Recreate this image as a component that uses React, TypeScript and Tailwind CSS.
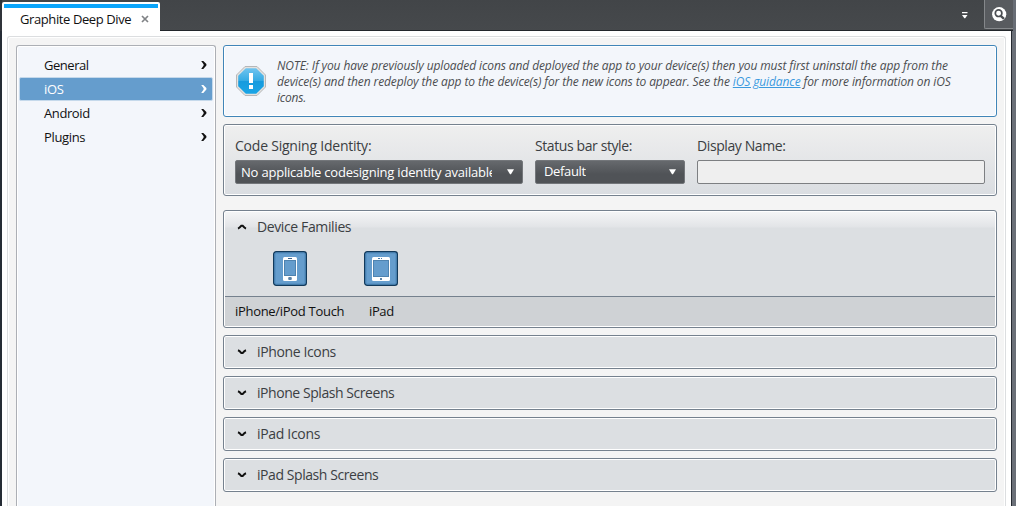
import type { ReactNode } from "react";

function Chevron({ dir, className = "" }: { dir: "up" | "down" | "right"; className?: string }) {
  if (dir === "right")
    return (
      <svg width="6" height="8" viewBox="0 0 6 8" className={className} fill="currentColor">
        <path d="M.2 0h2.1L5.4 3v1.6L2.3 8H.2l2.4-3.4V3.2z" />
      </svg>
    );
  return (
    <svg width="10" height="6" viewBox="0 0 10 6" className={className} fill="none" stroke="#111" strokeWidth="2">
      <path d={dir === "up" ? "M1 4.7C2.2 4.2 3.5 2.8 4.4 1.7h1.2c.9 1.1 2.2 2.5 3.4 3" : "M1 1.2C2.2 1.6 3.5 3 4.4 4.1h1.2C6.5 3 7.8 1.6 9 1.2"} />
    </svg>
  );
}

function Panel({ children, className = "" }: { children?: ReactNode; className?: string }) {
  return (
    <section className={`shrink-0 rounded-[3px] border border-[#75818e] shadow-[inset_0_0_0_1px_#fff] ${className}`}>
      {children}
    </section>
  );
}

function Select({ children, className = "", textClass = "" }: { children: ReactNode; className?: string; textClass?: string }) {
  return (
    <button
      className={`flex h-6 items-center justify-between rounded-[2px] border border-[#73767a] bg-linear-to-b from-[#66696d] to-[#505357] to-60% pr-[7px] text-left text-[13px] text-white ${className}`}
    >
      <span className={`overflow-hidden whitespace-nowrap leading-5 ${textClass}`}>{children}</span>
      <svg width="9" height="6" viewBox="0 0 9 6" className="shrink-0">
        <path d="M1 .3h7L5 5.2H4z" fill="#fff" />
      </svg>
    </button>
  );
}

function Device({ tablet = false }: { tablet?: boolean }) {
  return (
    <svg width="34" height="35" viewBox="0 0 34 35">
      <rect x=".7" y=".7" width="32.6" height="33.6" rx="2.5" fill="#659dcd" stroke="#123a5c" strokeWidth="1.4" />
      <rect x="1.9" y="1.9" width="30.2" height="31.2" rx="1" fill="none" stroke="#4b86b8" />
      {tablet ? (
        <>
          <rect x="8" y="6" width="18" height="24" rx="1.5" fill="#fff" />
          <rect x="9.5" y="9.5" width="15" height="16" fill="#659dcd" stroke="#4f83af" />
          <path d="M14 7.5h2M17 7.5h1" stroke="#467ba8" />
          <rect x="16" y="27" width="2" height="2" fill="#5c84a8" />
        </>
      ) : (
        <>
          <rect x="10" y="6" width="14" height="24" rx="1.5" fill="#fff" />
          <rect x="11.5" y="9.5" width="11" height="15" fill="#659dcd" stroke="#4f83af" />
          <path d="M15 7.5h4" stroke="#3c6288" />
          <rect x="15.2" y="26" width="3.6" height="3" rx="1" fill="#5c84a8" />
        </>
      )}
    </svg>
  );
}

const nav = [
  { name: "General", text: "tracking-[-0.45px]" },
  { name: "iOS", text: "tracking-[-0.3px]" },
  { name: "Android", text: "tracking-[-0.4px]" },
  { name: "Plugins", text: "tracking-[-0.35px]" },
];

const sections = [
  { name: "iPhone Icons", text: "tracking-[-0.37px]" },
  { name: "iPhone Splash Screens", text: "tracking-[-0.44px]" },
  { name: "iPad Icons", text: "tracking-[-0.32px]" },
  { name: "iPad Splash Screens", text: "tracking-[-0.43px]" },
];

export default function App() {
  return (
    <div className="flex h-[506px] w-[1016px] flex-col overflow-hidden bg-[#434649] font-['Open_Sans',sans-serif] text-[13px] text-[#111]">
      <header className="flex h-[31px] shrink-0 items-end justify-between border-l-2 border-[#30343a] bg-linear-to-b from-[#424548] to-[#46494c]">
        <div className="flex h-[29px] w-[158px] flex-col rounded-t-[2px] bg-white px-[2px] pt-[2px]">
          <div className="h-1 bg-[#0aa5fb]" />
          <div className="flex h-[23px] items-center pl-4">
            <span className="w-[121px] whitespace-nowrap tracking-[-0.4px]">Graphite Deep Dive</span>
            <svg width="8" height="8" viewBox="0 0 8 8" className="mb-[2px] shrink-0">
              <path d="M1 1l6 6M7 1L1 7" stroke="#808386" strokeWidth="1.7" />
            </svg>
          </div>
        </div>
        <div className="flex h-[31px] flex-1 items-start justify-end border-b border-[#22262b]">
          <svg width="6" height="7" viewBox="0 0 6 7" className="mt-3 mr-4">
            <path d="M0 0h5.5v1.3H0zM0 3h5.5L3.2 6.2h-.9z" fill="#fff" />
          </svg>
          <div className="flex h-[29px] w-[29px] items-center justify-center rounded-bl-[2px] border-b border-l border-[#85888b] bg-[#585b5f]">
            <svg width="15" height="15" viewBox="0 0 15 15">
              <circle cx="7.2" cy="7.2" r="7.1" fill="#fff" />
              <circle cx="6.6" cy="6.2" r="3.3" fill="none" stroke="#4b4e52" strokeWidth="1.7" />
              <path d="M8.8 8.8l3.2 3" stroke="#4b4e52" strokeWidth="2.3" />
            </svg>
          </div>
          <div className="h-[31px] w-[3px] bg-[#686d75]" />
        </div>
      </header>
      <div className="flex h-[475px] border-l-2 border-[#252c35]">
        <div className="w-[1009px] shrink-0 bg-white px-[5px] pt-[5px]">
          <div className="flex h-[480px] w-[999px] rounded-t-[3px] border border-b-0 border-[#dcdee0] bg-[#f4f4f4] pt-2 pl-2 shadow-[inset_0_0_0_1px_#fff]">
            <nav className="h-[470px] w-[200px] shrink-0 rounded-t-[3px] border border-b-0 border-[#acafb5] bg-[#f3f6fb] px-[2px] pt-[7px] shadow-[inset_0_0_0_1px_#fff]">
              {nav.map((n) => (
                <div
                  key={n.name}
                  className={`flex h-6 items-center justify-between rounded-[2px] border pr-[5px] pl-6 ${
                    n.name === "iOS" ? "border-[#c5d9eb] bg-[#659dcd] text-white" : "border-transparent"
                  }`}
                >
                  <span className={`pt-[2px] ${n.text}`}>{n.name}</span>
                  <Chevron dir="right" />
                </div>
              ))}
            </nav>
            <main className="ml-[7px] flex w-[774px] flex-col">
              <section className="flex h-[72px] shrink-0 rounded-[3px] border border-[#4085b8] bg-[#f3f6fb] pt-3 pl-[11px] shadow-[inset_0_0_0_1px_#fff]">
                <svg width="32" height="32" viewBox="0 0 32 32" className="mt-[7px] shrink-0">
                  <defs>
                    <linearGradient id="notice" x1="0" y1="0" x2="0" y2="1">
                      <stop offset="0" stopColor="#70c4ef" />
                      <stop offset=".48" stopColor="#35abe4" />
                      <stop offset=".52" stopColor="#169bde" />
                      <stop offset="1" stopColor="#1aa5e6" />
                    </linearGradient>
                  </defs>
                  <path d="M10 1.5h12L30.5 10v12L22 30.5H10L1.5 22V10z" fill="#e4e2df" stroke="#b5b7b9" />
                  <path d="M10.8 3.2h10.4l7.6 7.6v10.4l-7.6 7.6H10.8l-7.6-7.6V10.8z" fill="url(#notice)" />
                  <path d="M14 8h4v10h-4zM14 20h4v4h-4z" fill="#fff" />
                </svg>
                <p className="ml-[10px] whitespace-nowrap text-[12px] leading-4 text-[#4b4d50] italic">
                  <span className="block tracking-[-0.11px]">NOTE: If you have previously uploaded icons and deployed the app to your device(s) then you must first uninstall the app from the</span>
                  <span className="block tracking-[-0.11px]">
                    device(s) and then redeploy the app to the device(s) for the new icons to appear. See the{" "}
                    <a className="text-[#3b9ade] underline">iOS guidance</a> for more information on iOS
                  </span>
                  <span className="block tracking-[-0.2px]">icons.</span>
                </p>
              </section>
              <Panel className="mt-[7px] flex h-[72px] bg-linear-to-b from-[#efefef] to-[#dadde1] pt-[11px] pl-[11px] text-[#3b3e42]">
                <div className="w-[300px]">
                  <div className="mb-1 h-5 text-[14px] leading-5 tracking-[-0.22px]">Code Signing Identity:</div>
                  <Select className="w-[288px] pl-[5px]" textClass="w-[251px] tracking-[-0.2px]">No applicable codesigning identity available</Select>
                </div>
                <div className="w-[162px]">
                  <div className="mb-1 h-5 text-[14px] leading-5 tracking-[-0.4px]">Status bar style:</div>
                  <Select className="w-[150px] pl-2" textClass="pb-[2px] tracking-[-0.35px]">Default</Select>
                </div>
                <div>
                  <div className="mb-1 h-5 text-[14px] leading-5 tracking-[-0.4px]">Display Name:</div>
                  <input className="block h-6 w-[288px] rounded-[2px] border border-[#7d7f82] bg-[#efefef]" />
                </div>
              </Panel>
              <Panel className="mt-[14px] h-[118px] bg-[#dcdfe2] p-px">
                <div className="flex h-[85px] flex-col border-b border-[#75818e]">
                  <div className="flex h-[30px] items-center bg-[linear-gradient(to_bottom,#f4f5f6_0px,#e2e4e7_15px,#dcdfe2_16px)] pl-3 text-[#3b3e42]">
                    <Chevron dir="up" />
                    <span className="ml-[10px] pb-[2px] text-[14px] tracking-[-0.38px]">Device Families</span>
                  </div>
                  <div className="flex gap-[57px] pt-[9px] pl-12">
                    <Device />
                    <Device tablet />
                  </div>
                </div>
                <div className="flex h-[29px] items-center bg-[#cfd2d5] pl-[10px] text-[13px]">
                  <span className="w-[134px] tracking-[-0.3px]">iPhone/iPod Touch</span>
                  <span className="tracking-[-0.4px]">iPad</span>
                </div>
              </Panel>
              {sections.map((s) => (
                <Panel key={s.name} className="mt-[7px] flex h-[34px] items-center bg-[#dcdfe2] pl-[13px] text-[#3b3e42]">
                  <Chevron dir="down" />
                  <span className={`ml-[10px] pb-[2px] text-[14px] ${s.text}`}>{s.name}</span>
                </Panel>
              ))}
            </main>
          </div>
        </div>
        <div className="w-[5px] border-l border-[#252a31] bg-[#6b7078]" />
      </div>
    </div>
  );
}
